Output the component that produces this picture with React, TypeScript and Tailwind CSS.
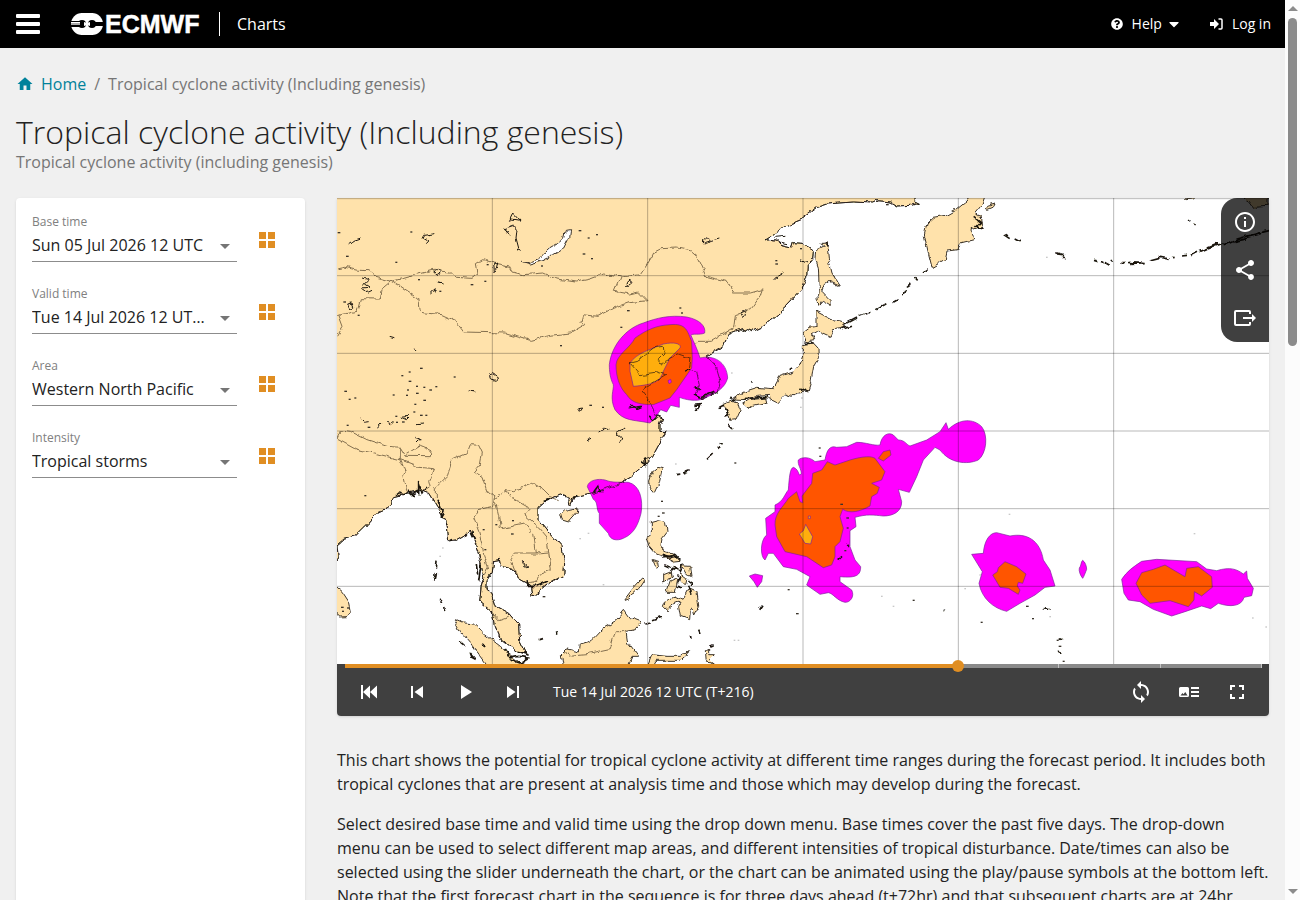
import React, { useState } from 'react';
import {
  MdFullscreen,
  MdHome,
  MdOutlineInfo,
  MdPlayArrow,
  MdShare,
  MdSkipNext,
  MdSkipPrevious,
  MdSync,
} from 'react-icons/md';
import { FaCaretDown, FaQuestionCircle } from 'react-icons/fa';

const MAINLAND =
  'M-9,-9 L1734,-9 1734,8 1750,16 1719,22 1680,24 1659,12 1619,8 1604,15 1549,12 1469,18 1439,28 1389,65 1349,82 1319,102 1287,122 1319,126 1329,142 1364,150 1369,134 1399,136 1429,158 1427,185 1411,205 1409,235 1404,250 1394,278 1349,325 1309,360 1279,385 1244,402 1214,392 1174,408 1159,445 1109,475 1139,510 1151,550 1144,580 1089,605 1074,590 1087,560 1079,520 1054,510 1059,480 1024,468 969,495 961,485 981,465 979,445 949,450 899,490 879,495 909,530 960,522 989,530 939,560 914,580 944,620 954,650 977,660 969,680 969,700 987,701 969,731 945,775 924,801 884,836 849,856 769,886 709,901 700,921 695,901 670,891 625,911 603,931 603,961 640,1006 675,1046 683,1096 680,1131 630,1161 585,1196 580,1161 545,1141 525,1111 490,1101 487,1084 467,1088 463,1126 450,1146 450,1174 465,1186 478,1226 515,1246 545,1281 548,1331 565,1366 540,1361 490,1321 475,1286 470,1246 428,1211 432,1166 440,1136 425,1066 410,1026 400,996 385,1014 358,1030 335,1026 330,976 300,926 275,886 250,876 165,898 160,926 125,941 90,980 55,1014 20,1024 0,1041 4,1080 -9,1112 Z';

const ISLANDS = [
  // Sri Lanka, Hainan, Taiwan
  'M-9,1160 L15,1180 38,1215 43,1240 30,1256 8,1257 -9,1240Z',
  'M668,950 L680,938 720,930 718,945 695,972 672,965Z',
  'M935,852 L945,820 960,808 976,812 968,850 951,886 937,870Z',
  // Kamchatka
  'M1909,-9 L1855,35 1825,52 1788,58 1770,75 1762,112 1773,160 1785,208 1825,185 1830,162 1863,158 1870,135 1910,125 1905,95 1935,85 1930,55 1912,48 1935,20 1945,-9Z',
  'M1945,32 L1952,25 1974,18 1970,26 1950,34Z',
  // Sakhalin
  'M1439,155 L1459,145 1455,133 1469,132 1474,180 1485,225 1507,262 1479,250 1462,262 1455,280 1479,305 1479,322 1459,310 1445,325 1443,300 1447,280 1444,205 1437,185Z',
  // Hokkaido, Honshu, Shikoku, Kyushu
  'M1437,340 L1485,365 1525,372 1523,390 1489,395 1479,418 1439,400 1424,408 1433,425 1407,428 1397,405 1419,388 1437,385Z',
  'M1399,440 L1429,435 1443,450 1444,480 1430,505 1422,550 1413,578 1389,582 1369,595 1345,588 1319,615 1299,605 1297,592 1259,595 1230,605 1189,603 1221,580 1259,568 1309,572 1329,535 1369,522 1389,498 1399,468Z',
  'M1220,618 L1240,605 1289,600 1292,612 1250,622 1235,632Z',
  'M1159,620 L1185,610 1205,615 1210,635 1195,668 1178,670 1170,640Z',
  // Philippines
  'M943,970 L962,965 985,970 990,1000 975,1020 972,1045 980,1060 1010,1068 1030,1090 1012,1092 985,1078 955,1068 935,1045 928,1020 943,1012Z',
  'M945,1085 L965,1090 967,1105 957,1112Z M1035,1103 L1058,1105 1062,1135 1050,1130Z M980,1130 L1000,1122 1003,1140 980,1152Z M1000,1150 L1020,1142 1012,1180 990,1180Z M1030,1125 L1050,1140 1045,1160 1032,1150Z',
  'M979,1225 L985,1210 1010,1200 1020,1205 1045,1195 1058,1170 1080,1180 1085,1225 1073,1248 1068,1230 1060,1235 1058,1265 1030,1255 1025,1228 1035,1210 1010,1220 990,1235Z',
  'M862,1205 L885,1175 917,1140 925,1145 905,1175 875,1200Z',
  // Borneo, Sulawesi, Halmahera
  'M680,1409 L673,1370 690,1353 727,1362 730,1335 765,1325 795,1293 835,1270 862,1237 880,1262 914,1275 895,1295 870,1300 875,1335 905,1375 885,1375 870,1409Z',
  'M930,1409 L945,1370 990,1375 1030,1375 1055,1355 1050,1372 1030,1390 960,1390 950,1409Z',
  'M1105,1355 L1115,1350 1115,1370 1135,1370 1120,1385 1135,1395 1108,1393Z',
  // Sumatra
  'M352,1265 L375,1275 408,1277 445,1310 490,1345 530,1380 570,1409 455,1409 430,1375 400,1335 370,1300Z',
];

const BORDERS =
  'M0,210 L25,205 60,213 90,215 120,238 165,250 230,232 285,217 340,222 355,235 405,238 420,228 415,200 440,185 470,195 515,203 525,222 560,230 620,225 660,243 715,252 760,243 800,228 850,237 910,230 930,200 945,175 950,165 975,152 1020,150 1060,158 1085,180 1110,235 1170,250 1189,285 1240,285 1275,275 1270,295 1240,335 1195,350 1190,390 1120,430 1080,430 1024,468 ' +
  'M850,237 L832,280 880,288 905,282 930,308 870,315 830,330 780,355 740,350 735,370 743,380 700,405 640,412 580,427 505,405 380,402 355,368 315,350 250,343 245,300 180,258 165,250 135,275 130,303 70,302 60,340 0,352 ' +
  'M5,350 L18,385 0,415 ' +
  'M0,720 L10,696 40,700 90,725 150,745 190,748 205,772 280,773 282,755 250,742 205,770 M0,720 L60,753 110,765 190,785 230,800 235,810 290,815 275,850 280,870 270,876 M190,785 L205,820 200,832 210,880 M190,748 L190,785 ' +
  'M295,900 L295,870 330,835 345,785 390,765 400,740 425,742 436,765 430,800 412,822 435,835 450,880 475,900 490,890 510,875 530,878 590,856 615,870 640,895 665,905 M475,900 L470,925 425,935 410,960 425,1000 435,1040 440,1070 455,1110 445,1130 M475,910 L485,955 490,990 560,975 590,1010 598,1065 635,1062 630,1020 605,990 560,950 580,930 545,910 520,900 510,875 M598,1065 L535,1065 522,1085 535,1120 545,1140 M635,1062 L643,1115 605,1130 600,1150 570,1155 ' +
  'M470,1246 L485,1265 515,1255 M685,1360 L695,1375 750,1370 820,1355 835,1298 870,1298';

const LAKES =
  'M500,95 L530,85 540,95 537,120 545,150 M497,92 L520,112 M504,98 L512,108 M520,68 L530,48 550,70 522,65 M545,150 L537,155 550,160 M30,140 L45,130 75,120 M265,140 L272,132 255,122 260,112 295,107 M78,240 L95,245 82,258 98,268 75,270 95,285 105,280 M287,222 L300,215 310,225 298,232Z M280,285 L295,272 290,285 M300,250 L320,255 M470,200 L482,195 478,215 472,220Z M865,262 L880,248 885,254 870,266Z M32,318 L45,315 50,328 38,330Z M458,535 L470,530 485,540 478,547 460,542Z M1095,135 L1110,122 1120,132 1100,138 M1120,130 L1147,123 M1309,242 L1337,225 M1315,118 L1345,115 M1325,135 L1350,140 M1390,185 L1407,195 M1212,345 L1222,338 1230,350 1218,358Z M555,1090 L572,1107 560,1103Z M235,452 L242,462 M158,418 L172,422 M725,632 L737,630 730,640Z M395,582 L415,585 M68,660 L80,670 95,668 M150,675 L160,680 170,672 M190,658 L215,655 205,665Z M800,690 L795,700 M840,700 L865,690 M750,725 L765,718 M785,705 L800,695 M840,705 L855,718 848,735 M795,690 L820,696 M875,630 L910,625 895,635 M240,680 L255,678 M235,718 L250,722 240,732 M120,695 L135,678';

const ARCS =
  'M1519,382 L1560,360 M1565,355 L1600,342 M1618,335 L1645,320 M1670,312 L1682,305 M1698,290 L1705,275 M1710,265 L1720,258 M1735,240 L1745,250 M1755,228 L1775,215 M1515,392 L1545,382 M2000,110 L2018,122 M2036,120 L2052,128 M2158,164 L2178,170 2160,168 M2175,176 L2182,182 M2268,187 L2278,190 M2290,186 L2318,202 M2325,187 L2318,184 M2350,200 L2360,192 M2372,190 L2420,194 2385,196 M2438,186 L2468,178 2495,184 M2505,179 L2510,178 M2535,174 L2550,172 M2560,170 L2580,160 M2588,158 L2640,136 2605,150 M2615,150 L2660,134 M2660,140 L2700,122 2740,112 2796,98 M2690,130 L2730,122 M2556,64 L2560,66 M2572,78 L2576,80 M300,1085 L298,1115 M295,1125 L290,1150 M310,1205 L315,1215 M320,1230 L323,1240 M418,1098 L422,1130 M432,1100 L425,1150 M605,1325 L615,1322 M655,1300 L660,1310 M370,1332 L382,1342 M400,1365 L418,1385 405,1378Z M435,1335 L445,1340 M1148,733 L1160,738 M1110,787 L1130,768 M1142,752 L1150,745 M1017,830 L1030,828 M1040,825 L1058,818 M922,1278 L945,1275 M945,1265 L975,1255 M1265,1235 L1275,1220 M1088,1295 L1092,1305 M1060,1312 L1062,1320 M1120,1345 L1130,1340 M1080,635 L1090,620 M1145,632 L1165,622 M1240,556 L1245,552 M1355,515 L1362,510 M1185,690 L1175,680 M1075,622 L1092,620 M975,1080 L1020,1075 M985,1100 L1002,1108 M1010,1105 L1025,1115 M1020,1165 L1035,1170 M1055,1160 L1065,1190 M1505,1085 L1515,1075 M1528,1045 L1532,1040 M2120,1232 L2142,1236 M2165,1325 L2172,1328 M2165,1355 L2172,1365 M1820,1236 L1825,1238';

const JAGGED =
  'M180,890 L190,882 200,895 215,880 225,890 240,878 245,890 245,855 255,885 270,870 M300,905 L310,932 318,935 316,960 325,945 M345,1020 L340,1030 360,1026 M400,1005 L410,1025 M570,1150 L575,1165 600,1165 630,1152 M620,910 L640,905 M700,900 L720,895 M770,885 L785,865 788,880 800,880 M910,790 L925,800 920,785 935,780 M1070,590 L1090,600 1110,590 1135,580 M1045,520 L1060,512 M1075,560 L1085,575 M1165,630 L1175,650 1165,655 M1180,600 L1195,610 M1220,602 L1290,598 M1390,570 L1410,580 M935,655 L950,670 965,655 M885,620 L898,632 915,625 M500,1350 L520,1380 545,1375 575,1380 550,1395 520,1385 M540,1360 L575,1372 M1465,130 L1470,145 M1405,432 L1430,435 M1910,55 L1930,70 1915,85 1938,90 M975,1072 L1000,1080 1015,1068 1030,1085 M1000,1120 L1015,1108 1030,1120 1040,1100 M1015,1130 L1030,1140 1020,1155 M1055,1145 L1065,1160';

const SPECKS: [number, number][] = [
  [5, 104], [223, 102], [178, 193], [30, 175], [452, 200], [246, 245], [404, 260], [445, 250], [615, 204], [728, 98],
  [755, 120], [780, 110], [740, 168], [765, 182], [65, 352], [22, 312], [310, 280], [218, 522], [252, 511], [196, 533],
  [353, 537], [218, 550], [240, 565], [262, 568], [280, 576], [298, 566], [213, 576], [240, 586], [210, 592], [170, 591],
  [25, 580], [38, 604], [55, 600], [262, 607], [235, 619], [232, 642], [252, 652], [268, 652], [178, 655], [198, 672],
  [180, 673], [32, 682], [95, 688], [672, 443], [853, 388], [873, 338], [1030, 330], [1035, 345], [760, 622], [798, 628],
  [1318, 188], [1318, 198], [1392, 152], [85, 893], [248, 725], [478, 980], [528, 968], [525, 1008], [440, 995], [445, 1055],
  [15, 1228], [33, 1230], [18, 1240], [620, 1196], [1195, 795], [975, 910], [978, 945], [965, 955], [1355, 1175],
  [1380, 1247], [1448, 750], [1450, 775], [1531, 960], [1532, 990], [1525, 1058], [1513, 919], [1730, 1207],
  [1934, 1273], [2070, 1225], [2088, 1262], [2162, 1327], [2168, 1345], [2180, 1390], [1620, 10], [1650, 20],
];

const FAINT_SPECKS: [number, number][] = [
  [755, 1006], [730, 1022], [318, 1050], [310, 1075], [800, 1160], [1017, 798], [1193, 1327], [1205, 1327], [1670, 1225],
  [1635, 1195], [2018, 949], [2140, 1256], [2573, 1007], [2748, 1260], [2788, 1287], [1885, 1172], [1185, 525], [1392, 628],
  [1395, 600], [2130, 178], [1930, 1131],
];

function CycloneMap() {
  const columns = [466, 932, 1398, 1864, 2330];
  const rows = [2, 233, 466, 699, 932, 1165];
  return (
    <svg viewBox="0 0 2796 1398" role="img" aria-label="Tropical cyclone activity map" className="block w-full bg-white">
      <defs>
        <filter id="coast" filterUnits="userSpaceOnUse" x="-10" y="-10" width="2816" height="1418">
          <feTurbulence type="fractalNoise" baseFrequency="0.035" numOctaves="3" seed="4" result="n" />
          <feDisplacementMap in="SourceGraphic" in2="n" scale="18" xChannelSelector="R" yChannelSelector="G" />
        </filter>
      </defs>
      <g filter="url(#coast)" fill="#ffe2ab" stroke="#3c342a" strokeWidth="3">
        <path d={MAINLAND} />
        {ISLANDS.map((d) => (
          <path key={d} d={d} />
        ))}
        <path d="M2715,-9 L2730,2 2750,28 2796,25 2796,-9Z" />
        <path d="M2535,-9 L2550,5 2570,3 2580,-9Z" />
        <path d="M553,190 L575,194 605,182 640,150 665,135 680,120 685,100 698,98 695,120 680,150 650,170 615,188 580,198Z" fill="#fff" />
        <path d={BORDERS} fill="none" stroke="#84704f" />
      </g>
      <g stroke="#7a1f9c" strokeWidth="2">
        <g transform="translate(789 0)">
          <path fill="#ff00ff" d="M28,500 C35,440 80,390 130,375 C170,360 210,350 260,357 C300,365 318,385 314,405 C300,412 275,405 273,412 C280,430 295,460 300,480 C340,470 380,490 383,540 C375,570 350,585 310,602 C290,612 255,605 238,598 L238,628 212,622 200,642 182,635 165,660 150,675 C100,665 70,670 45,635 C28,600 42,575 40,560 C30,540 28,520 28,500Z" />
          <path fill="#ff5500" d="M48,500 C50,470 90,450 105,420 C140,395 170,382 210,380 C260,375 262,400 275,430 L277,480 275,510 230,575 210,600 160,620 C120,620 95,615 80,590 C60,570 48,540 48,500Z" />
          <path fill="#ffae0d" d="M90,495 C110,465 150,455 190,438 C230,430 245,440 240,450 L210,480 190,520 C180,550 165,560 100,565 L90,520Z" />
          <path fill="#ff00ff" d="M204,548 L212,544 214,553 207,557Z" />
        </g>
        <path fill="#ff00ff" d="M751,866 C754,846 784,841 804,846 C829,856 844,851 874,853 C909,861 919,906 912,946 C904,976 894,1006 859,1021 C839,1030 819,1026 814,1006 L787,976 787,946 C777,936 784,911 769,904Z" />
        <g transform="translate(1209 636)">
          <path fill="#ff00ff" d="M175,150 C185,140 210,140 225,155 L255,150 C260,120 270,105 290,112 L320,110 350,97 C380,97 400,108 420,105 C425,75 445,65 460,75 L475,90 C495,90 500,105 510,108 L560,90 600,65 618,38 625,58 C660,25 700,25 725,50 C745,75 740,130 715,150 C680,165 630,160 600,120 L585,112 550,150 530,200 508,247 475,238 485,275 C485,305 460,318 430,318 C400,315 380,312 345,322 L348,350 330,362 330,410 345,450 362,470 C362,495 350,505 300,500 L300,515 335,540 C345,560 330,578 315,577 C290,572 280,550 265,548 L240,553 200,525 210,500 170,478 130,470 100,430 85,430 75,450 C60,440 60,390 80,375 L77,325 105,305 105,285 C130,275 135,250 145,240 C148,200 150,175 160,172 C170,175 175,185 178,195 L184,192 C184,175 172,165 175,150Z" />
          <path fill="#ff5500" d="M105,345 C103,310 130,290 145,265 L170,245 180,275 188,278 186,258 215,220 218,190 245,180 262,155 285,165 330,150 C370,138 395,138 405,145 L435,185 425,210 395,220 418,232 412,250 395,260 390,288 C360,305 330,312 308,298 L300,320 310,355 300,395 285,410 285,440 275,465 250,473 200,440 135,425 110,380Z" />
          <path fill="#ff5500" d="M415,145 L430,125 450,120 453,135 430,153Z" />
          <path fill="#ffae0d" d="M178,372 L190,362 197,343 218,380 212,402 195,400Z M205,318h6v8h-6z" />
          <path fill="#ff00ff" d="M28,498 L45,492 68,497 65,515 52,532 42,515Z" />
        </g>
        <g transform="translate(1809 906)">
          <path fill="#ff00ff" d="M95,163 L130,160 C133,120 150,98 170,98 L210,108 C260,98 300,120 310,180 L330,210 345,258 315,262 285,285 240,310 200,334 C160,325 125,295 117,250 L127,215Z" />
          <path fill="#ff5500" d="M158,225 L172,215 175,203 195,185 230,200 258,222 248,250 235,247 232,258 240,270 235,283 205,265 180,262Z" />
          <path fill="#ff00ff" d="M428,181 C436,186 440,200 440,208 C437,215 432,230 428,235 C420,225 416,212 418,204 C424,198 422,186 428,181Z" />
          <path fill="#ff00ff" d="M545,238 C560,215 580,200 605,184 L650,178 770,185 800,207 830,212 C870,200 890,207 910,222 L920,213 922,235 940,265 935,287 912,292 C905,320 870,322 835,310 L812,326 785,318 735,335 695,348 640,328 600,305 565,300 552,280Z" />
          <path fill="#ff5500" d="M588,250 L605,218 640,208 675,195 735,230 740,205 775,200 815,230 817,262 785,288 763,275 762,300 745,320 690,302 630,310 605,285Z" />
        </g>
      </g>
      <g filter="url(#coast)" fill="none" stroke="#1c1710">
        <path d={MAINLAND} strokeWidth="2" />
        <path d={LAKES} strokeWidth="3" />
        <path d={ARCS} strokeWidth="5" />
        <path d={JAGGED} strokeWidth="5" />
      </g>
      <g fill="#3a332a">
        {SPECKS.map(([x, y], i) => (
          <rect key={i} x={x - 3} y={y - 2} width={i % 3 ? 6 : 8} height="4" />
        ))}
      </g>
      <g fill="#c8c8c8">
        {FAINT_SPECKS.map(([x, y], i) => (
          <rect key={i} x={x - 3} y={y - 2} width="5" height="4" />
        ))}
      </g>
      <g stroke="#000" strokeOpacity="0.28" strokeWidth="3">
        {columns.map((x) => (
          <line key={x} x1={x} y1="0" x2={x} y2="1398" />
        ))}
        {rows.map((y) => (
          <line key={y} x1="0" y1={y} x2="2796" y2={y} />
        ))}
      </g>
    </svg>
  );
}

function Logo() {
  return (
    <svg width="134" height="32" viewBox="0 -4 134 32" role="img" aria-label="ECMWF" className="block">
      <g fill="#fff">
        <circle cx="11" cy="12" r="11" />
        <circle cx="21" cy="12" r="11" />
        <path d="M10 1h12v4H10zM10 19h12v4H10z" />
      </g>
      <circle cx="11" cy="12" r="4" fill="#000" />
      <circle cx="21" cy="12" r="4" fill="#000" />
      <path d="M0 9h10v1H0zM0 13h10v2H0zM21 10h11v4H21z" fill="#000" />
      <path d="M0 10h9v1H0z" fill="#fff" />
      <path d="M0 11h9v2H0z" fill="#aaa" />
      <path d="M13 10l3 1 3-1v4l-3-1-3 1z" fill="#fff" />
      <text x="34" y="21" fill="#fff" stroke="#fff" strokeWidth="0.5" fontSize="25" fontWeight="700" fontFamily="Liberation Sans, sans-serif">
        ECMWF
      </text>
    </svg>
  );
}

const FIELDS = [
  { id: 'base', label: 'Base time', value: 'Sun 05 Jul 2026 12 UTC' },
  { id: 'valid', label: 'Valid time', value: 'Tue 14 Jul 2026 12 UTC (T+216)' },
  { id: 'area', label: 'Area', value: 'Western North Pacific' },
  { id: 'intensity', label: 'Intensity', value: 'Tropical storms' },
];

function Field({ id, label, value }: { id: string; label: string; value: string }) {
  return (
    <div className="flex h-[72px] items-start gap-[18px]">
      <div className="w-[205px]">
        <label htmlFor={id} className="block h-5 text-xs leading-5 text-[#808080]">
          {label}
        </label>
        <div className="relative border-b border-[#8c8c8c]">
          <select id={id} className="block h-[29px] w-full appearance-none truncate bg-transparent pr-8 pb-1 text-base leading-6 text-[#222] outline-none">
            <option>{value}</option>
          </select>
          <svg width="10" height="5" viewBox="0 0 10 5" className="pointer-events-none absolute top-3 right-[7px]">
            <path d="M0 0h10L5 5z" fill="#757575" />
          </svg>
        </div>
      </div>
      <button type="button" aria-label={`Show all: ${label}`} className="mt-4 flex size-6 items-center justify-center">
        <svg width="16" height="16" viewBox="0 0 16 16" fill="#e08e23">
          <path d="M0 0h7v7H0zM9 0h7v7H9zM0 9h7v7H0zM9 9h7v7H9z" />
        </svg>
      </button>
    </div>
  );
}

function IconButton({ label, children }: { label: string; children: React.ReactNode }) {
  return (
    <button type="button" aria-label={label} className="flex size-12 items-center justify-center text-white">
      {children}
    </button>
  );
}

function Player() {
  const [step, setStep] = useState(216);
  return (
    <div className="relative rounded-b bg-[#404040] text-white">
      <div className="relative ml-2 mr-[7px] flex h-1 bg-[#8a8a8a]">
        <div className="w-[66.8%] bg-[#e08e23]" />
        <div className="flex flex-1 justify-between">
          <span />
          <span className="w-px bg-[#c4c4c4]" />
          <span className="w-px bg-[#c4c4c4]" />
          <span className="w-px bg-[#c4c4c4]" />
        </div>
        <span className="absolute -top-1 left-[66.8%] size-3 -translate-x-1/2 rounded-full bg-[#e08e23]" />
        <input
          type="range"
          aria-label="Forecast step"
          min={72}
          max={288}
          step={24}
          value={step}
          onChange={(e) => setStep(Number(e.target.value))}
          className="absolute inset-0 w-full cursor-pointer opacity-0"
        />
      </div>
      <div className="flex h-12 items-center px-2">
        <IconButton label="First">
          <svg width="24" height="24" viewBox="0 0 24 24" fill="currentColor">
            <path d="M4 5h2v14H4zM13 5.500v13L6 12zM20 5.500v13L13 12z" />
          </svg>
        </IconButton>
        <IconButton label="Previous">
          <MdSkipPrevious size={24} />
        </IconButton>
        <IconButton label="Play">
          <MdPlayArrow size={24} />
        </IconButton>
        <IconButton label="Next">
          <MdSkipNext size={24} />
        </IconButton>
        <span className="flex-1 pl-4 text-sm">Tue 14 Jul 2026 12 UTC (T+216)</span>
        <IconButton label="Loop">
          <MdSync size={24} />
        </IconButton>
        <IconButton label="Legend">
          <svg width="24" height="24" viewBox="0 0 24 24" fill="currentColor">
            <path fillRule="evenodd" d="M3.500 7h7A1.500 1.500 0 0 1 12 8.500v7a1.500 1.500 0 0 1-1.500 1.500h-7A1.500 1.500 0 0 1 2 15.500v-7A1.500 1.500 0 0 1 3.500 7zM3.500 15.500h7L8.300 12l-1.800 2.200-1-1.200z" />
            <path d="M14 7h8v2h-8zM14 11h8v2h-8zM14 15h8v2h-8z" />
          </svg>
        </IconButton>
        <IconButton label="Full screen">
          <MdFullscreen size={24} />
        </IconButton>
      </div>
    </div>
  );
}

export default function App() {
  return (
    <div className="flex h-screen overflow-hidden bg-[#f0f0f0] font-['Open_Sans','Noto_Sans',sans-serif] text-[#222]">
      <div className="min-w-0 flex-1">
        <header className="flex h-12 items-center bg-black pr-[14px] pl-4 text-white">
          <button type="button" aria-label="Menu" className="flex w-6 flex-col gap-1">
            <span className="h-1 w-full rounded-[1px] bg-white" />
            <span className="h-1 w-full rounded-[1px] bg-white" />
            <span className="h-1 w-full rounded-[1px] bg-white" />
          </button>
          <a href="#ecmwf" className="ml-[31px]">
            <Logo />
          </a>
          <span className="mr-[17px] ml-[14px] h-6 w-px bg-white" />
          <a href="#charts" className="text-base">
            Charts
          </a>
          <nav className="ml-auto flex items-center gap-7 text-sm">
            <button type="button" className="flex items-center">
              <FaQuestionCircle size={12} />
              <span className="ml-[9px]">Help</span>
              <FaCaretDown size={16} className="ml-1" />
            </button>
            <a href="#login" className="flex items-center">
              <svg width="13" height="12" viewBox="0 0 13 12">
                <path d="M0 4h4V1l5 5-5 5V8H0z" fill="#fff" />
                <path d="M8.500 1H11a1 1 0 0 1 1 1v8a1 1 0 0 1-1 1H8.500" fill="none" stroke="#fff" strokeWidth="1.500" />
              </svg>
              <span className="ml-[9px]">Log in</span>
            </a>
          </nav>
        </header>

        <main className="px-4 pt-6">
          <nav aria-label="Breadcrumb" className="flex h-6 items-center text-base text-[#767676]">
            <a href="#home" className="flex items-center text-[#00829b]">
              <MdHome size={18} />
              <span className="ml-[7px]">Home</span>
            </a>
            <span className="mx-2">/</span>
            <span>Tropical cyclone activity (Including genesis)</span>
          </nav>
          <h1 className="mt-4 text-[32px] leading-10 font-light">Tropical cyclone activity (Including genesis)</h1>
          <p className="text-base leading-5 text-[#767676]">Tropical cyclone activity (including genesis)</p>

          <div className="mt-[26px] flex items-stretch gap-8">
            <aside className="min-h-[760px] w-[289px] shrink-0 rounded bg-white p-4 pt-[14px] shadow-sm">
              {FIELDS.map((f) => (
                <Field key={f.id} {...f} />
              ))}
            </aside>

            <section className="min-w-0 flex-1">
              <div className="relative rounded-b shadow">
                <CycloneMap />
                <div className="absolute top-0 right-0 flex flex-col rounded-l-2xl bg-black/75">
                  <IconButton label="Information">
                    <MdOutlineInfo size={24} />
                  </IconButton>
                  <IconButton label="Share">
                    <MdShare size={24} />
                  </IconButton>
                  <IconButton label="Export">
                    <svg width="24" height="24" viewBox="0 0 24 24" fill="none" stroke="currentColor" strokeWidth="2">
                      <path d="M17 8V6a1 1 0 0 0-1-1H3a1 1 0 0 0-1 1v12a1 1 0 0 0 1 1h13a1 1 0 0 0 1-1v-2M10 12h10" />
                      <path d="M19 8l4 4-4 4z" fill="currentColor" stroke="none" />
                    </svg>
                  </IconButton>
                </div>
                <Player />
              </div>
              <div className="mt-8 space-y-4 text-base leading-6">
                <p>
                  This chart shows the potential for tropical cyclone activity at different time ranges during the
                  forecast period. It includes both tropical cyclones that are present at analysis time and those which
                  may develop during the forecast.
                </p>
                <p>
                  Select desired base time and valid time using the drop down menu. Base times cover the past five days.
                  The drop-down menu can be used to select different map areas, and different intensities of tropical
                  disturbance. Date/times can also be selected using the slider underneath the chart, or the chart can be
                  animated using the play/pause symbols at the bottom left. Note that the first forecast chart in the
                  sequence is for three days ahead (t+72hr) and that subsequent charts are at 24hr intervals.
                </p>
              </div>
            </section>
          </div>
        </main>
      </div>

      <div aria-hidden="true" className="flex w-[15px] shrink-0 flex-col items-center justify-between bg-[#fcfcfc] py-[6px]">
        <div className="flex flex-col items-center gap-[7px]">
          <svg width="10" height="5" viewBox="0 0 10 5">
            <path d="M0 5h10L5 0z" fill="#8b8b8b" />
          </svg>
          <span className="h-[328px] w-[9px] rounded-full bg-[#8b8b8b]" />
        </div>
        <svg width="10" height="5" viewBox="0 0 10 5">
          <path d="M0 0h10L5 5z" fill="#8b8b8b" />
        </svg>
      </div>
    </div>
  );
}
